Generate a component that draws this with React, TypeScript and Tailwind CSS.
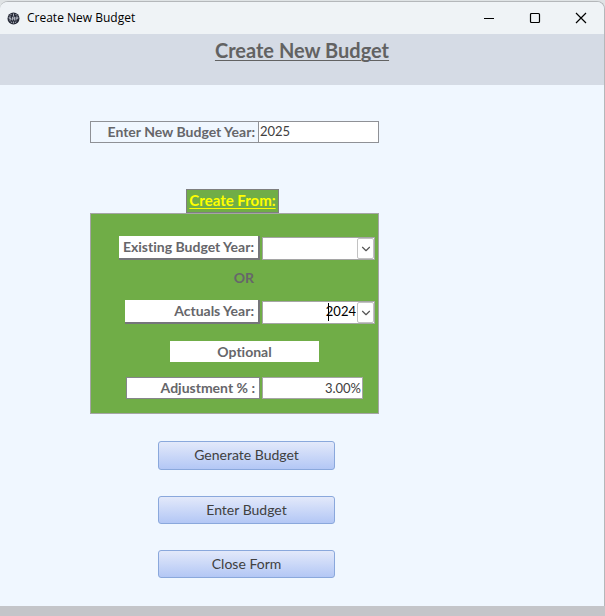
import React from "react";
import { ChevronDown } from "lucide-react";

const label =
  "flex items-center justify-end bg-white pr-1 text-sm font-bold text-[#66666a]";
const raised =
  "h-6 border-r-2 border-b-2 border-r-[#75757a] border-b-[#75757a]";
const button =
  "w-[177px] rounded-[3px] border border-[#8aa8dc] bg-linear-to-b from-[#e3e9fa] to-[#b3c7f5] pb-px text-sm leading-5 text-[#404040]";

function YearSelect({ id, value }: { id: string; value: string }) {
  return (
    <div className="relative h-[23px] w-[113px]">
      <select
        id={id}
        defaultValue={value}
        className="block h-full w-full appearance-none border border-[#a5a5a5] bg-white pr-[18px] pb-[2px] text-right text-[13px] text-black [text-align-last:right] outline-none"
      >
        <option value=""></option>
        <option value="2024">2024</option>
        <option value="2023">2023</option>
      </select>
      <span className="pointer-events-none absolute inset-y-px right-px flex w-[17px] items-center justify-center rounded-[2px] border border-[#c2c2c2] bg-white text-[#555555]">
        <ChevronDown size={14} strokeWidth={2} className="shrink-0" />
      </span>
      {/* text cursor */}
      {value && (
        <span className="pointer-events-none absolute top-[2px] right-[46px] h-[18px] w-px bg-black" />
      )}
    </div>
  );
}

export default function App() {
  return (
    <div className="flex min-h-screen flex-col bg-[#dfe3e5] pt-px font-[Lato,sans-serif] [font-variant-ligatures:none]">
      <div className="flex flex-1 flex-col overflow-hidden rounded-t-lg border-t border-r border-[#b4b7ba] bg-[#f0f7ff]">
        {/* title bar */}
        <div className="flex h-8 items-center bg-[#eff3f6] pl-[7px] text-black">
          <svg width="13" height="13" viewBox="0 0 13 13" fill="none">
            <circle cx="6.5" cy="6.5" r="6" fill="#272b38" />
            <path
              d="M4.5 2 3 3.5M6.5 1.5v2.5M8.5 2 10 3.5M4 5H2.2v1.5H4V8H2.2M5.5 8.5V5h2v3.5M5.5 6.8h2M9 8.5V5h1.8v1.7H9M4 9.5l1 1.5M6.5 9.5v2M9 9.5 8 11"
              stroke="#c5cad6"
              strokeWidth="0.8"
            />
          </svg>
          <span className="ml-[7px] font-[Open_Sans,sans-serif] text-xs">
            Create New Budget
          </span>
          <div className="ml-auto flex">
            <button aria-label="Minimize" className="flex w-[46px] justify-center">
              <svg width="12" height="12" viewBox="0 0 12 12" stroke="currentColor">
                <path d="M1 6.5h10" />
              </svg>
            </button>
            <button aria-label="Maximize" className="flex w-[46px] justify-center">
              <svg width="12" height="12" viewBox="0 0 12 12" fill="none" stroke="currentColor">
                <rect x="1.5" y="1.5" width="9" height="9" rx="1" strokeWidth="1.2" />
              </svg>
            </button>
            <button aria-label="Close" className="flex w-[46px] justify-center">
              <svg width="12" height="12" viewBox="0 0 12 12" stroke="currentColor">
                <path d="M1 1l10 10M11 1 1 11" strokeWidth="1.2" />
              </svg>
            </button>
          </div>
        </div>

        {/* header */}
        <header className="h-[51px] bg-[#d5dbe5] pt-1 text-center">
          <h1 className="text-xl leading-6 font-bold text-[#626262] underline decoration-1 underline-offset-2">
            Create New Budget
          </h1>
        </header>

        {/* form */}
        <form className="ml-[90px] flex w-[289px] flex-1 flex-col pt-9">
          <div className="flex h-[22px] border border-[#8f9196]">
            <label
              htmlFor="newYear"
              className="flex w-[168px] items-center justify-end border-r border-[#8f9196] pr-[3px] text-sm font-bold text-[#66666a]"
            >
              Enter New Budget Year:
            </label>
            <input
              id="newYear"
              defaultValue="2025"
              className="min-w-0 flex-1 bg-white px-px text-[13px] text-[#404040] outline-none"
            />
          </div>

          <h2 className="mt-[46px] ml-24 flex h-6 w-[93px] items-center justify-center border border-[#7f7f7f] bg-[#70ad47] pb-[2px] text-[15px] font-bold text-[#ffff00] underline decoration-1 underline-offset-2">
            Create From:
          </h2>

          <div className="flex flex-col border border-[#a5a5a5] bg-[#70ad47] pt-[22px] pb-[14px]">
            <div className="grid grid-cols-[169px_1fr] items-end gap-x-[2px]">
              <label htmlFor="existing" className={`${label} ${raised} w-[141px] justify-self-end`}>
                Existing Budget Year:
              </label>
              <YearSelect id="existing" value="" />
            </div>
            <p className="w-[163px] pt-2 pb-3 text-right text-sm leading-5 font-bold text-[#66666a]">
              OR
            </p>
            <div className="grid grid-cols-[169px_1fr] items-end gap-x-[2px]">
              <label htmlFor="actuals" className={`${label} ${raised} w-[135px] justify-self-end`}>
                Actuals Year:
              </label>
              <YearSelect id="actuals" value="2024" />
            </div>
            <p className="mt-[17px] ml-[79px] w-[149px] bg-white text-center text-sm leading-[21px] font-bold text-[#66666a]">
              Optional
            </p>
            <div className="mt-[15px] grid grid-cols-[169px_1fr] gap-x-[2px]">
              <label
                htmlFor="adjustment"
                className={`${label} h-[22px] w-[134px] justify-self-end border border-[#85858a]`}
              >
                Adjustment % :
              </label>
              <input
                id="adjustment"
                defaultValue="3.00%"
                className="h-[22px] w-[101px] border border-[#a5a5a5] bg-white px-px text-right text-[13px] text-[#404040] outline-none"
              />
            </div>
          </div>

          <div className="mt-[27px] ml-[68px] flex flex-col items-start gap-[26px] pb-7">
            <button type="button" className={`${button} h-[29px]`}>
              Generate Budget
            </button>
            <button type="button" className={`${button} h-7`}>
              Enter Budget
            </button>
            <button type="button" className={`${button} h-7`}>
              Close Form
            </button>
          </div>
        </form>
      </div>
      <footer className="h-[10px] bg-[#c4c5c9]" />
    </div>
  );
}
